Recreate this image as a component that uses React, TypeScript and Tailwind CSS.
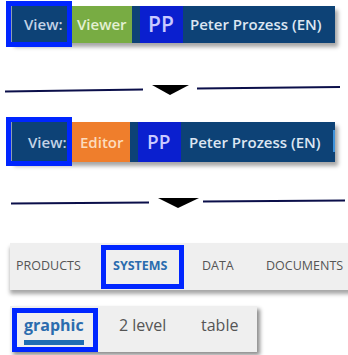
import React from 'react';

const navy = 'bg-[#0d4276]';

function Highlight({ className }: { className: string }) {
  return <div className={`pointer-events-none absolute border-[5px] border-[#0026ff] ${className}`} />;
}

function Divider({ left, right, tri }: { left: number[]; right: number[]; tri: number[] }) {
  return (
    <svg width="348" height="20" viewBox="0 0 348 20" className="block">
      <line x1={left[0]} y1={left[1]} x2={left[2]} y2={left[3]} stroke="#0b0f4a" strokeWidth="2" />
      <line x1={right[0]} y1={right[1]} x2={right[2]} y2={right[3]} stroke="#0b0f4a" strokeWidth="2" />
      <polygon points={`${tri[0]},${tri[1]} ${tri[2]},${tri[1]} ${tri[3]},${tri[4]}`} fill="#000" />
    </svg>
  );
}

function UserBar({
  mode,
  modeClass,
  modeText,
  pad,
}: {
  mode: string;
  modeClass: string;
  modeText: string;
  pad: { view: string; pp: string; ppText: string; name: string };
}) {
  return (
    <div className="relative flex h-full w-[324px] shadow-[3px_4px_4px_rgba(0,0,0,0.35)]">
      <div className={`relative flex w-[61px] items-center border-l border-[#8c9db3] ${navy} ${pad.view}`}>
        <span className="text-[15px] font-semibold text-[#c2d2e6]">View:</span>
        <Highlight className="-left-[6px] -top-[5px] -bottom-[4px] right-0" />
      </div>
      <div className={`flex items-center ${modeClass}`}>
        <span className={`text-[15px] font-semibold ${modeText}`}>{mode}</span>
      </div>
      <div className={`w-[8px] ${navy}`} />
      <div className={`flex w-[43px] items-center bg-[#0a1fcf] ${pad.pp}`}>
        <span className={`font-semibold leading-none text-[#c9c9ff] ${pad.ppText}`}>PP</span>
      </div>
      <div className={`flex flex-1 items-center ${navy} ${pad.name}`}>
        <span className="text-[15px] font-semibold text-[#dce6f2]">Peter Prozess (EN)</span>
      </div>
    </div>
  );
}

export default function App() {
  return (
    <div className="h-[355px] w-[348px] overflow-hidden bg-white font-['Open_Sans',sans-serif]">
      <div className="mt-[6px] h-[37px] pl-[11px]">
        <UserBar
          mode="Viewer"
          modeClass="w-[60px] bg-[#78ac43] pl-[5px]"
          modeText="text-[#e4f0d2]"
          pad={{ view: 'pl-[12px]', pp: 'pl-[8px]', ppText: 'text-[21px]', name: 'pl-[7px]' }}
        />
      </div>

      <div className="mt-[37px]">
        <Divider left={[5, 11.5, 143, 9.5]} right={[197, 8.5, 340, 7]} tri={[152, 5, 189, 170, 15]} />
      </div>

      <div className="relative mt-[22px] h-[40px] pl-[11px]">
        <UserBar
          mode="Editor"
          modeClass="w-[58px] bg-[#ef7e2c] pl-[8px]"
          modeText="text-[#fcdcbd]"
          pad={{ view: 'pl-[16px]', pp: 'pl-[9px]', ppText: 'text-[19px]', name: 'pl-[8px]' }}
        />
        <div className="absolute left-[333px] top-[8px] h-[22px] w-[2px] bg-[#3f93dc]" />
      </div>

      <div className="mt-[30px]">
        <Divider left={[11, 11.5, 149, 10.5]} right={[203, 9.5, 345, 8.5]} tri={[158, 6, 199, 178, 16]} />
      </div>

      <div className="mt-[31px] pl-[10px]">
        <div className="flex h-[47px] w-[345px] items-center bg-[#efefef] text-[12.5px] text-[#555] shadow-[0_4px_4px_rgba(0,0,0,0.35)]">
          <span className="ml-[6px] w-[64px] whitespace-nowrap">PRODUCTS</span>
          <span className="relative ml-[33px] w-[56px] whitespace-nowrap font-bold text-[#2b6cae]">
            SYSTEMS
            <Highlight className="-left-[12px] -right-[15px] -top-[12px] -bottom-[13px]" />
          </span>
          <span className="ml-[33px] w-[30px] whitespace-nowrap">DATA</span>
          <span className="ml-[34px] whitespace-nowrap">DOCUMENTS</span>
        </div>
      </div>

      <div className="mt-[16px] pl-[10px]">
        <div className="flex h-[46px] w-[247px] items-stretch bg-[#efefef] text-[16px] text-[#555] shadow-[3px_3px_4px_rgba(0,0,0,0.45)]">
          <div className="relative ml-[14px] flex w-[60px] flex-col">
            <span className="mt-[7px] whitespace-nowrap font-bold leading-[24px] text-[#2b6cae]">graphic</span>
            <div className="mb-[7px] mt-auto h-[5px] bg-[#1f6db3]" />
            <Highlight className="-left-[12px] -right-[14px] top-[2px] bottom-0" />
          </div>
          <span className="ml-[35px] mt-[7px] w-[47px] whitespace-nowrap leading-[24px]">2 level</span>
          <span className="ml-[35px] mt-[7px] whitespace-nowrap leading-[24px]">table</span>
        </div>
      </div>
    </div>
  );
}
